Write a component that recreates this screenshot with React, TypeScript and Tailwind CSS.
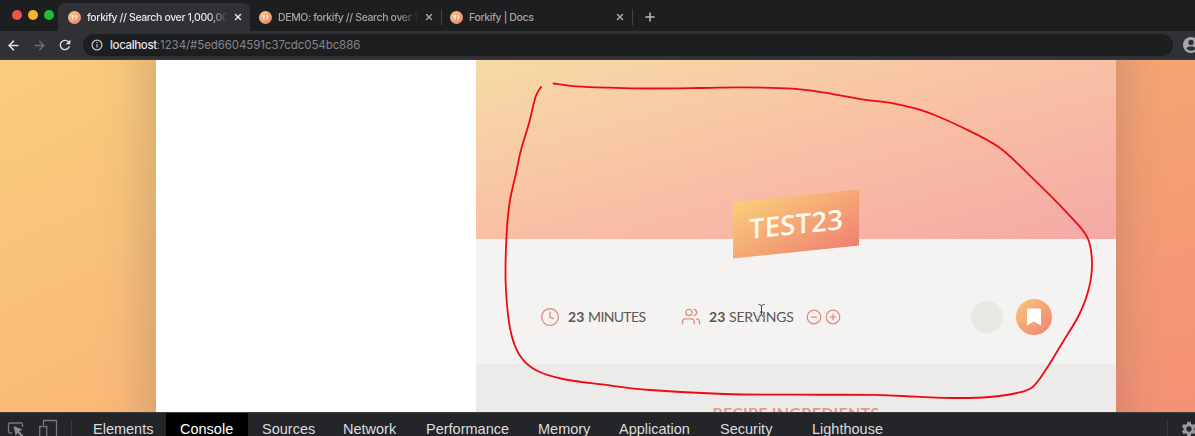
import React from "react";
import { ArrowLeft, ArrowRight, Clock, Plus, X } from "lucide-react";
import { MdRefresh, MdSettings } from "react-icons/md";

function Favicon() {
  return (
    <svg className="h-[13px] w-[13px] shrink-0" viewBox="0 0 13 13">
      <defs>
        <linearGradient id="fav" x1="0" y1="0" x2="1" y2="1">
          <stop offset="0" stopColor="#f5cd8c" />
          <stop offset="1" stopColor="#e87f6c" />
        </linearGradient>
      </defs>
      <circle cx="6.5" cy="6.5" r="6.5" fill="url(#fav)" />
      <path d="M4 4v2q0 .8.8.8T5.6 6V4M4.8 4v5.2M8 9.2V4q1.3.6 1.2 2.7H8" fill="none" stroke="#fff3e5" strokeWidth=".8" />
    </svg>
  );
}

function Tab({ title, active = false, fade = "" }: { title: string; active?: boolean; fade?: string }) {
  return (
    <div
      className={
        active
          ? "flex h-[28px] w-[192px] items-center rounded-t-[7px] bg-[#303134] pl-[10px] text-[#e6e7e9]"
          : "flex h-[28px] w-[191px] items-center pl-[9px] text-[#a4a5a7]"
      }
    >
      <Favicon />
      <div className={"ml-[6px] w-[142px] overflow-hidden whitespace-nowrap pt-px text-[10.5px] font-[450] leading-[16px] tracking-[-0.38px] " + fade}>{title}</div>
      <X className="ml-[4px] h-[10px] w-[10px]" strokeWidth={3.6} />
    </div>
  );
}

function TabBar() {
  return (
    <div className="flex h-[31px] items-end bg-[#1d1e20]">
      <div className="mb-[10px] ml-[12px] flex h-[13px] w-[46px] items-center gap-[6px]">
        <span className="h-[10px] w-[10px] shrink-0 rounded-full bg-[#f0544c]" />
        <span className="h-[10px] w-[10px] shrink-0 rounded-full bg-[#f4b52e]" />
        <span className="h-[10px] w-[10px] shrink-0 rounded-full bg-[#24bb37]" />
      </div>
      <Tab
        active
        title="forkify // Search over 1,000,000"
        fade="[mask-image:linear-gradient(to_right,black_85%,transparent_99%)]"
      />
      <Tab
        title="DEMO: forkify // Search over 1,000"
        fade="[mask-image:linear-gradient(to_right,black_85%,transparent_99%)]"
      />
      <span className="-mr-px mb-[6px] h-[16px] w-px bg-[#434447]" />
      <Tab title="Forkify | Docs" />
      <span className="mb-[6px] h-[16px] w-px bg-[#434447]" />
      <Plus className="mb-[7px] ml-[10px] h-[14px] w-[14px] text-[#b9babd]" strokeWidth={2.6} />
    </div>
  );
}

function AddressBar() {
  return (
    <div className="flex h-[29px] items-center overflow-hidden border-b border-[#3c3a39] bg-[#303134]">
      <ArrowLeft className="ml-[6px] h-[15px] w-[15px] shrink-0 text-[#dedfe1]" strokeWidth={2.4} />
      <ArrowRight className="ml-[11px] h-[15px] w-[15px] shrink-0 text-[#707174]" strokeWidth={2.2} />
      <MdRefresh className="ml-[10px] h-[16px] w-[16px] shrink-0 text-[#dedfe1]" />
      <div className="ml-[10px] flex h-[22px] w-[1090px] shrink-0 items-center rounded-full bg-[#1d1e20] pl-[8px] text-[11.5px] leading-[18px]">
        <svg className="h-[12px] w-[12px]" viewBox="0 0 12 12" fill="none" stroke="#c8c9cb" strokeWidth="1.2">
          <circle cx="6" cy="6" r="4.9" />
          <path d="M6 5.3v3.3M6 3.1v1.2" />
        </svg>
        <span className="ml-[7px] font-medium tracking-[-0.35px] text-[#e3e4e6]">localhost</span>
        <span className="tracking-[-0.08px] text-[#85868a]">:1234/#5ed6604591c37cdc054bc886</span>
      </div>
      <svg className="ml-[10px] h-[16px] w-[16px] shrink-0" viewBox="0 0 16 16">
        <circle cx="8" cy="8" r="8" fill="#a7a8ab" />
        <circle cx="8" cy="5.4" r="2.6" fill="#303134" />
        <path d="M3.2 11.3q1.5-2 4.8-2t4.8 2Q11 13.8 8 13.8t-4.8-2.5z" fill="#303134" />
      </svg>
    </div>
  );
}

function People() {
  return (
    <svg className="h-[20px] w-[20px]" viewBox="0 0 20 20" fill="none" stroke="#df9283" strokeWidth="1.35" strokeLinecap="round">
      <circle cx="8" cy="5.4" r="3.1" />
      <path d="M1.5 17v-2.2q0-3 3-3h5.7q3 0 3 3V17M13.2 2.4q2.5.8 2.5 3t-2.5 3.1M15.6 11.9q3 .5 3 3.3V17" />
    </svg>
  );
}

function StepIcon({ plus = false }: { plus?: boolean }) {
  return (
    <svg className="h-[16px] w-[16px]" viewBox="0 0 16 16" fill="none" stroke="#df8d7e" strokeWidth="1.25" strokeLinecap="round">
      <circle cx="8" cy="8" r="6.8" />
      <path d={plus ? "M5.2 8h5.6M8 5.2v5.6" : "M5.2 8h5.6"} />
    </svg>
  );
}

function Details() {
  return (
    <div className="flex h-[125px] items-center bg-[#f4f3f2] pl-[64px] pt-[31px] text-[14px] leading-[20px] text-[#615551]">
      <Clock className="h-[20px] w-[20px] text-[#df9283]" strokeWidth={1.7} />
      <div className="ml-[8px] w-[113px] whitespace-nowrap font-['Lato','Noto_Sans',sans-serif]">
        <b className="tracking-[0.1px]">23</b> <span className="tracking-[-0.65px]">MINUTES</span>
      </div>
      <People />
      <div className="ml-[8px] w-[98px] whitespace-nowrap font-['Lato','Noto_Sans',sans-serif]">
        <b className="tracking-[0.1px]">23</b> <span className="tracking-[-0.2px]">SERVINGS</span>
      </div>
      <div className="-ml-px flex gap-[3px]">
        <StepIcon />
        <StepIcon plus />
      </div>
      <span className="ml-[130px] h-[32px] w-[32px] rounded-full bg-[#e9e8e3]" />
      <div className="ml-[13px] flex h-[36px] w-[36px] items-center justify-center rounded-full bg-linear-to-br from-[#f8c77c] to-[#ee8172]">
        <svg className="h-[18px] w-[14px]" viewBox="0 0 14 18">
          <path d="M1.5.5h11q1.5 0 1.5 1.500v15.500l-7-4-7 4V2Q0 .5 1.500.5z" fill="#fff" />
        </svg>
      </div>
    </div>
  );
}

function Recipe() {
  return (
    <div className="relative flex h-[352px] w-[640px] flex-col overflow-hidden">
      <div className="h-[179px] shrink-0 bg-[linear-gradient(to_bottom_right,#f6dba5_0%,#f9bda5_55%,#f4a9a6_100%)]" />
      <Details />
      <div className="flex flex-1 justify-center overflow-hidden bg-[#ecebea] pt-[37px]">
        <h2 className="whitespace-nowrap font-['Lato','Noto_Sans',sans-serif] text-[16px] font-bold leading-[24px] tracking-[0.24px] text-[#e39a8c]">
          RECIPE INGREDIENTS
        </h2>
      </div>
      <h1 className="absolute left-[257px] top-[136px] flex h-[56px] w-[126px] -skew-y-6 items-center justify-center bg-linear-to-br from-[#f8cf77] to-[#ef7f73] font-['Open_Sans','Noto_Sans',sans-serif] text-[27.5px] font-semibold leading-none tracking-[0.2px] text-[#fffaf0]">
        TEST23
      </h1>
    </div>
  );
}

const STROKE_POINTS: [number, number][] = [
  [553.5, 83.5], [577, 86.3], [610, 87.7], [645.6, 88.5], [700, 88], [742, 87.3], [792, 88.7], [824.5, 92.7],
  [863.5, 99.6], [889, 102.7], [916, 108.7], [934.5, 115], [962, 127.3], [999, 147.3], [1031, 176.7],
  [1067.5, 213.3], [1087, 236.7], [1092, 261.7], [1089, 288], [1079, 315], [1063, 341.7], [1047, 368],
  [1033, 386.7], [1017, 393], [989.5, 397], [957.5, 398], [916, 396.7], [875, 394.9], [797, 394.7],
  [723.6, 394], [650, 390], [604, 384.7], [563, 379], [535.6, 370], [519.5, 355], [510.4, 330],
  [505.8, 286.7], [506.3, 240], [509.5, 203.3], [516, 173.3], [521, 150], [529, 123.3], [535.6, 96.7], [541, 87],
];

/** Catmull-Rom spline through the points, as cubic Bezier segments. */
function smoothPath(points: [number, number][]) {
  let d = `M${points[0][0]} ${points[0][1]}`;
  for (let i = 0; i < points.length - 1; i++) {
    const a = points[Math.max(i - 1, 0)];
    const b = points[i];
    const c = points[i + 1];
    const e = points[Math.min(i + 2, points.length - 1)];
    d += `C${b[0] + (c[0] - a[0]) / 6} ${b[1] + (c[1] - a[1]) / 6} ${c[0] - (e[0] - b[0]) / 6} ${c[1] - (e[1] - b[1]) / 6} ${c[0]} ${c[1]}`;
  }
  return d;
}

function Marker() {
  return (
    <svg className="pointer-events-none absolute left-0 top-0 h-[436px] w-[1195px]" viewBox="0 0 1195 436" fill="none">
      <path d={smoothPath(STROKE_POINTS)} stroke="#f00910" strokeWidth="1.8" strokeLinecap="round" />
      <path d="M758.500 304.500q3 0 3 2v8q0 2-3 2M764.500 304.500q-3 0-3 2v8q0 2 3 2M760 312h3" stroke="#fff" strokeWidth="2.500" opacity=".7" />
      <path d="M758.500 304.500q3 0 3 2v8q0 2-3 2M764.500 304.500q-3 0-3 2v8q0 2 3 2M760 312h3" stroke="#444" strokeWidth="1" />
    </svg>
  );
}

function DevTools() {
  return (
    <div className="flex h-[24px] overflow-hidden border-t border-[#3d3d3f] bg-[#242528] font-['Liberation_Sans',sans-serif] text-[14.5px] leading-[33px] text-[#dcdddf]">
      <svg className="h-[23px] w-[76px] shrink-0" viewBox="0 0 76 23" fill="none" stroke="#77787b" strokeWidth="1.3">
        <path d="M12 20H10q-1.500 0-1.500-1.500v-7Q8.500 10 10 10h11q1.500 0 1.500 1.500V14" />
        <path d="M13.500 13l9 3.600-3.300 1.700 4.200 4.200-1.700 1.600-4.200-4.300-1.700 3.200z" fill="#8d8e91" stroke="none" />
        <path d="M43.500 12V7.500h13V25M39.700 25V13.500h7V25" />
        <path d="M71.500 7v16" stroke="#393a3d" strokeWidth="1" />
      </svg>
      <span className="ml-[17px] w-[73px] shrink-0">Elements</span>
      <span className="h-[23px] w-[82px] shrink-0 bg-black pl-[14px] text-white">Console</span>
      <span className="w-[95px] shrink-0 pl-[14px]">Sources</span>
      <span className="w-[83px] shrink-0">Network</span>
      <span className="w-[112px] shrink-0">Performance</span>
      <span className="w-[81px] shrink-0">Memory</span>
      <span className="w-[101px] shrink-0">Application</span>
      <span className="w-[92px] shrink-0">Security</span>
      <span className="w-[355px] shrink-0">Lighthouse</span>
      <span className="mt-[6px] h-[17px] w-px shrink-0 bg-[#37383b]" />
      <MdSettings className="ml-[12px] mt-[7px] h-[18px] w-[18px] shrink-0 text-[#98999c]" />
    </div>
  );
}

export default function App() {
  return (
    <div className="relative h-[436px] w-[1195px] overflow-hidden font-['Inter',sans-serif]">
      <TabBar />
      <AddressBar />
      <main className="flex h-[352px] overflow-hidden">
        <div className="h-full w-[156px] bg-[linear-gradient(to_right,transparent_62%,#61555108_78%,#6155512c_100%),linear-gradient(155deg,#f9cd7c,#fab777)]" />
        <div className="h-full w-[320px] bg-white" />
        <Recipe />
        <div className="h-full flex-1 bg-[linear-gradient(to_left,transparent_40%,#6155510c_68%,#61555128_100%),linear-gradient(165deg,#f5a473,#f49174)]" />
      </main>
      <DevTools />
      <Marker />
    </div>
  );
}
